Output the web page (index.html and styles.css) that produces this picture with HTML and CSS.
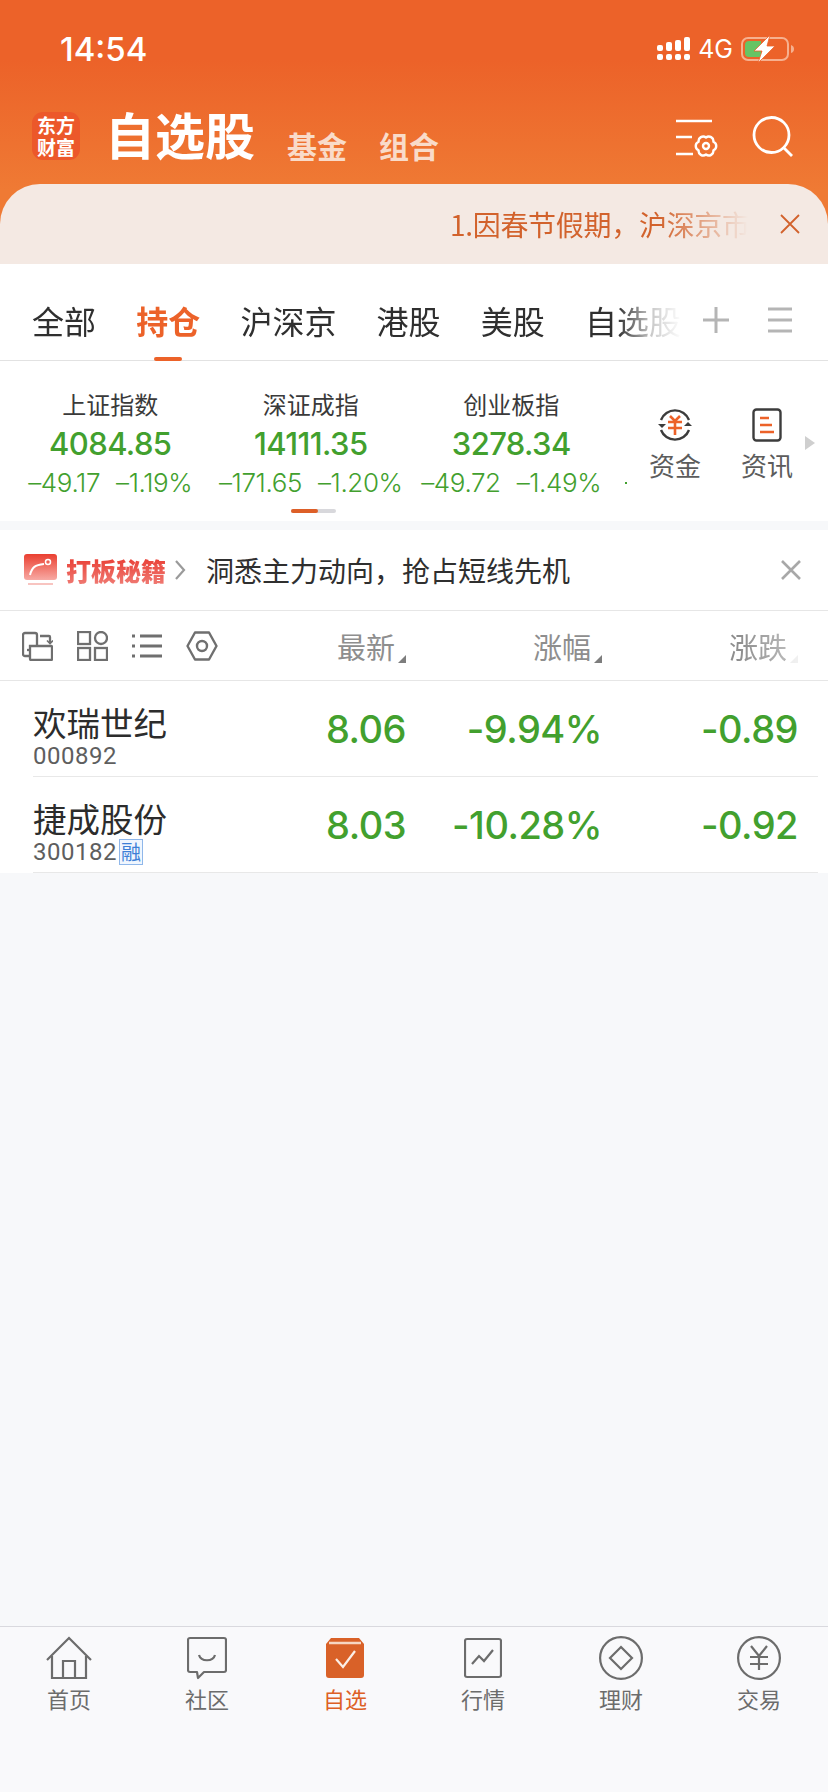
FILE: index.html
```html
<!DOCTYPE html>
<html lang="zh-CN">
<head>
  <meta charset="UTF-8">
  <meta name="viewport" content="width=device-width, initial-scale=1.0">
  <title>自选股</title>
  <link rel="stylesheet" href="styles.css">
</head>
<body>
<div class="page">

  <!-- orange header -->
  <header class="top">
    <div class="status">
      <span class="time">14:54</span>
      <div class="status-right">
        <svg class="signal" width="34" height="24" viewBox="0 0 34 24" fill="#fff">
          <rect x="0" y="8" width="6" height="6" rx="2"/><rect x="9" y="5" width="6" height="9" rx="2"/><rect x="18" y="3" width="6" height="11" rx="2"/><rect x="27" y="0" width="6" height="14" rx="2"/>
          <rect x="0" y="17" width="6" height="6" rx="2"/><rect x="9" y="17" width="6" height="6" rx="2"/><rect x="18" y="17" width="6" height="6" rx="2"/><rect x="27" y="17" width="6" height="6" rx="2"/>
        </svg>
        <span class="net">4G</span>
        <svg class="battery" width="54" height="28" viewBox="0 0 54 28">
          <rect x="1" y="3" width="46" height="22" rx="6" fill="none" stroke="#f6b08f" stroke-width="2"/>
          <path d="M8 6h12v16H8a4 4 0 0 1-4-4v-8a4 4 0 0 1 4-4z" fill="#66c464"/>
          <path d="M29 0 L13 16 H21 L17 28 L34 11 H26 Z" fill="#fff" stroke="#ec6229" stroke-width=".8"/>
          <path d="M50 10 q3 1 3 4 t-3 4z" fill="#f6b08f"/>
        </svg>
      </div>
    </div>
    <div class="head">
      <div class="logo"><span>东方</span><span>财富</span></div>
      <h1 class="title">自选股</h1>
      <a class="sub">基金</a>
      <a class="sub">组合</a>
      <div class="head-icons">
        <svg width="42" height="38" viewBox="0 0 42 38" fill="none" stroke="#fff" stroke-width="2.400">
          <path d="M0 2h36M0 18h16M0 35h17"/>
          <path d="M30 18.500A4.600 4.600 0 0 1 37.400 22.750A4.600 4.600 0 0 1 37.400 31.250A4.600 4.600 0 0 1 30 35.500A4.600 4.600 0 0 1 22.600 31.250A4.600 4.600 0 0 1 22.600 22.750A4.600 4.600 0 0 1 30 18.500z" stroke-linejoin="round"/>
          <circle cx="30" cy="27" r="3"/>
        </svg>
        <svg width="42" height="42" viewBox="0 0 42 42" fill="none" stroke="#fff" stroke-width="2.800">
          <circle cx="20.500" cy="20" r="17.500"/>
          <path d="M32 32l9 9"/>
        </svg>
      </div>
    </div>
    <div class="notice">
      <span class="notice-text">1.因春节假期，沪深京市</span>
      <svg class="notice-x" width="20" height="20" viewBox="0 0 20 20" fill="none" stroke="#d2622c" stroke-width="1.800"><path d="M1 1l18 18M19 1L1 19"/></svg>
    </div>
  </header>

  <!-- market tabs -->
  <nav class="tabs">
    <div class="tab-list">
      <a class="tab">全部</a>
      <a class="tab active">持仓</a>
      <a class="tab">沪深京</a>
      <a class="tab">港股</a>
      <a class="tab">美股</a>
      <a class="tab">自选股</a>
    </div>
    <svg class="tab-plus" width="28" height="28" viewBox="0 0 28 28" stroke="#b5b5b5" stroke-width="3"><path d="M14 1v26M1 14h26"/></svg>
    <svg class="tab-menu" width="24" height="26" viewBox="0 0 24 26" stroke="#b5b5b5" stroke-width="3"><path d="M0 2h24M0 13h24M0 24h24"/></svg>
  </nav>

  <!-- index strip -->
  <section class="indices">
    <div class="index-list">
      <div class="index">
        <div class="index-name">上证指数</div>
        <div class="index-value">4084.85</div>
        <div class="index-change"><span>–49.17</span><span>–1.19%</span></div>
      </div>
      <div class="index">
        <div class="index-name">深证成指</div>
        <div class="index-value">14111.35</div>
        <div class="index-change"><span>–171.65</span><span>–1.20%</span></div>
      </div>
      <div class="index">
        <div class="index-name">创业板指</div>
        <div class="index-value">3278.34</div>
        <div class="index-change"><span>–49.72</span><span>–1.49%</span></div>
      </div>
    </div>
    <span class="index-dot"></span>
    <div class="shortcut">
      <svg width="36" height="36" viewBox="0 0 36 36" fill="none">
        <path d="M4 13A15 15 0 0 1 32 13M32 23A15 15 0 0 1 4 23" stroke="#3c3c3c" stroke-width="2.400"/>
        <path d="M1 17l4 4 4-4zM27 19l4-4 4 4z" fill="#3c3c3c"/>
        <path d="M13 9l5 5 5-5M11 15h14M11 21h14M18 14v14" stroke="#ec6229" stroke-width="2.600"/>
      </svg>
      <span>资金</span>
    </div>
    <div class="shortcut">
      <svg width="30" height="34" viewBox="0 0 30 34" fill="none">
        <rect x="1.500" y="1.500" width="27" height="31" rx="3" stroke="#3c3c3c" stroke-width="2.400"/>
        <path d="M8 10h9M8 17h12M8 24h14" stroke="#ec6229" stroke-width="2.600"/>
      </svg>
      <span>资讯</span>
    </div>
    <span class="more-arrow"></span>
    <div class="pager"><span></span></div>
  </section>

  <!-- promo -->
  <section class="promo">
    <svg class="promo-icon" width="33" height="32" viewBox="0 0 33 32">
      <defs><linearGradient id="pg" x1="0" y1="0" x2="0" y2="1"><stop offset="0" stop-color="#ea3f30"/><stop offset="1" stop-color="#f7aaa4"/></linearGradient></defs>
      <rect x="0" y="0" width="33" height="26" rx="3" fill="url(#pg)"/>
      <rect x="4" y="29" width="25" height="2" fill="#f8c4c0"/>
      <path d="M6 21c2-8 5-10 14-11" fill="none" stroke="#fff" stroke-width="2"/>
      <circle cx="24" cy="8" r="2.500" fill="none" stroke="#fff" stroke-width="1.500"/>
    </svg>
    <span class="promo-name">打板秘籍</span>
    <svg class="promo-chev" width="11" height="20" viewBox="0 0 11 20" fill="none" stroke="#9a9a9a" stroke-width="2.200"><path d="M1 1l8 9-8 9"/></svg>
    <span class="promo-text">洞悉主力动向，抢占短线先机</span>
    <svg class="promo-x" width="20" height="20" viewBox="0 0 20 20" fill="none" stroke="#a8a8a8" stroke-width="2.600"><path d="M1 1l18 18M19 1L1 19"/></svg>
  </section>

  <!-- list header -->
  <section class="toolbar">
    <div class="tools">
      <svg width="31" height="30" viewBox="0 0 31 30" fill="none" stroke="#6f6f6f" stroke-width="2.300">
        <path d="M8 25H3a2 2 0 0 1-2-2V4a2 2 0 0 1 2-2h10a2 2 0 0 1 2 2v11"/>
        <path d="M8 15h21a1 1 0 0 1 1 1v12a1 1 0 0 1-1 1H9a1 1 0 0 1-1-1z"/>
        <path d="M5 19h3"/>
        <path d="M18 5h9a1 1 0 0 1 1 1v6"/>
        <path d="M25 9.500l3 3 3-3" stroke-width="1.600"/>
      </svg>
      <svg width="31" height="30" viewBox="0 0 31 30" fill="none" stroke="#6f6f6f" stroke-width="2.300">
        <rect x="1" y="1" width="12" height="12"/><circle cx="24" cy="7" r="6"/>
        <rect x="1" y="17" width="12" height="12"/><rect x="18" y="17" width="12" height="12"/>
      </svg>
      <svg width="30" height="26" viewBox="0 0 30 26" fill="none" stroke="#6f6f6f" stroke-width="3">
        <path d="M8 3h22M8 13h22M8 23h22M0 3h3M0 13h3M0 23h3"/>
      </svg>
      <svg width="32" height="30" viewBox="0 0 32 30" fill="none" stroke="#6f6f6f" stroke-width="2.400">
        <path d="M9 1.500h14L30.500 15 23 28.500H9L1.500 15z" stroke-linejoin="round"/>
        <circle cx="16" cy="15" r="5"/>
      </svg>
    </div>
    <div class="col col-1 sort">最新<i></i></div>
    <div class="col col-2 sort">涨幅<i></i></div>
    <div class="col col-3 sort fade">涨跌<i></i></div>
  </section>

  <!-- stock rows -->
  <section class="stocks">
    <div class="stock">
      <div class="stock-info">
        <div class="stock-name">欢瑞世纪</div>
        <div class="stock-code">000892</div>
      </div>
      <div class="col col-1 num">8.06</div>
      <div class="col col-2 num">-9.94%</div>
      <div class="col col-3 num">-0.89</div>
    </div>
    <div class="stock">
      <div class="stock-info">
        <div class="stock-name">捷成股份</div>
        <div class="stock-code">300182<span class="tag">融</span></div>
      </div>
      <div class="col col-1 num">8.03</div>
      <div class="col col-2 num">-10.28%</div>
      <div class="col col-3 num">-0.92</div>
    </div>
  </section>

  <div class="spacer"></div>

  <!-- bottom nav -->
  <footer class="bar">
    <a class="bar-item">
      <svg width="46" height="42" viewBox="0 0 46 42" fill="none" stroke="#6c6c6c" stroke-width="2.200">
        <path d="M1 23L23 1l22 22" />
        <path d="M6 19v22h34V19M17 41V24h12v17"/>
      </svg>
      <span>首页</span>
    </a>
    <a class="bar-item">
      <svg width="40" height="42" viewBox="0 0 40 42" fill="none" stroke="#6c6c6c" stroke-width="2.200">
        <path d="M3 1h34a2 2 0 0 1 2 2v30a2 2 0 0 1-2 2H17l-6 6-1-6H3a2 2 0 0 1-2-2V3a2 2 0 0 1 2-2z" stroke-linejoin="round"/>
        <path d="M12 18c2 7 14 7 16 0"/>
      </svg>
      <span>社区</span>
    </a>
    <a class="bar-item on">
      <svg width="38" height="40" viewBox="0 0 38 40">
        <path d="M5 0h28l5 6v31a3 3 0 0 1-3 3H3a3 3 0 0 1-3-3V6z" fill="#d96128"/>
        <path d="M3 5h32" stroke="#f6d6c2" stroke-width="2.500"/>
        <path d="M10 21l7 8 12-16" fill="none" stroke="#fbeee6" stroke-width="2.200"/>
      </svg>
      <span>自选</span>
    </a>
    <a class="bar-item">
      <svg width="38" height="40" viewBox="0 0 38 40" fill="none" stroke="#6c6c6c" stroke-width="2.200">
        <rect x="1" y="1" width="36" height="38" rx="2"/>
        <path d="M8 26l7-8 5 5 9-11"/>
      </svg>
      <span>行情</span>
    </a>
    <a class="bar-item">
      <svg width="44" height="44" viewBox="0 0 44 44" fill="none" stroke="#6c6c6c" stroke-width="2.200">
        <circle cx="22" cy="22" r="20.900"/>
        <path d="M22 11l11 11-11 11-11-11z"/>
      </svg>
      <span>理财</span>
    </a>
    <a class="bar-item">
      <svg width="44" height="44" viewBox="0 0 44 44" fill="none" stroke="#6c6c6c" stroke-width="2.200">
        <circle cx="22" cy="22" r="20.900"/>
        <path d="M14 10l8 10 8-10M13 21h18M13 28h18M22 20v14"/>
      </svg>
      <span>交易</span>
    </a>
  </footer>

</div>
</body>
</html>
```

FILE: styles.css
```css
/* Basic styling */
* {
  box-sizing: border-box;
}

body {
  margin: 0;
  font-family: "Noto Sans CJK SC", Inter, sans-serif;
  color: #2c2c2c;
}

.page {
  width: 828px;
  height: 1792px;
  display: flex;
  flex-direction: column;
  background: #f7f8fa;
  overflow: hidden;
}

/* Header */
.top {
  height: 264px;
  background: linear-gradient(#ec6229 0, #ec6229 60px, #ef7a34 190px);
  display: flex;
  flex-direction: column;
}

.status {
  height: 93px;
  padding: 30px 33px 0 60px;
  display: flex;
  justify-content: space-between;
  align-items: flex-start;
  color: #fff;
}

.time {
  font-family: Inter, sans-serif;
  font-weight: 500;
  font-size: 33px;
  line-height: 38px;
}

.status-right {
  display: flex;
  align-items: center;
  height: 38px;
}

.net {
  font-family: Inter, sans-serif;
  font-size: 25px;
  margin: 0 8px 0 7px;
}

.head {
  height: 91px;
  display: flex;
  align-items: center;
  padding: 0 35px 6px 32px;
}

.logo {
  width: 48px;
  height: 48px;
  border-radius: 11px;
  background: #ec582a;
  color: #fff;
  display: flex;
  flex-direction: column;
  align-items: center;
  justify-content: center;
  font-weight: 700;
  font-size: 19px;
  line-height: 22px;
}

.title {
  margin: -6px 32px 0 25px;
  color: #fff;
  font-size: 50px;
  font-weight: 700;
  line-height: 60px;
}

.sub {
  margin: 19px 32px 0 0;
  color: #f9dbc9;
  font-size: 30px;
  font-weight: 700;
  line-height: 40px;
}

.head-icons {
  margin-left: auto;
  display: flex;
  align-items: flex-end;
  gap: 33px;
}

.notice {
  height: 80px;
  background: #f4e9e3;
  border-radius: 40px 40px 0 0;
  display: flex;
  align-items: center;
  justify-content: flex-end;
  padding: 0 28px 0 0;
}

.notice-text {
  width: 298px;
  white-space: nowrap;
  overflow: hidden;
  font-size: 28px;
  line-height: 40px;
  letter-spacing: -.3px;
  color: #d2622c;
  -webkit-mask-image: linear-gradient(to right, #000 70%, transparent 100%);
  mask-image: linear-gradient(to right, #000 70%, transparent 100%);
}

.notice-x {
  margin-left: 32px;
}

/* Tabs */
.tabs {
  position: relative;
  height: 97px;
  background: #fff;
  border-bottom: 1px solid #e2e2e2;
  display: flex;
  align-items: center;
  padding: 15px 0 0 32px;
}

.tab-list {
  width: 650px;
  display: flex;
  gap: 40.200px;
  overflow: hidden;
  -webkit-mask-image: linear-gradient(to right, #000 585px, rgba(0,0,0,.25) 620px, transparent 650px);
  mask-image: linear-gradient(to right, #000 585px, rgba(0,0,0,.25) 620px, transparent 650px);
}

.tab {
  flex: none;
  font-size: 32px;
  line-height: 46px;
  color: #2f2f2f;
}

.tab.active {
  color: #ec6229;
  font-weight: 700;
}

.tab-plus {
  margin-left: 20px;
}

.tab-menu {
  margin-left: 38px;
}

/* The underline of the active tab sits on the tab bar's border, so it is an overlay */
.tabs::after {
  content: "";
  position: absolute;
  left: 154px;
  bottom: -1px;
  width: 28px;
  height: 4px;
  border-radius: 2px;
  background: #ec6229;
}

/* Index strip */
.indices {
  position: relative;
  height: 160px;
  background: #fff;
  display: flex;
  align-items: flex-start;
  padding: 25px 0 0 10px;
  margin-bottom: 9px;
}

.index-list {
  display: flex;
  width: 602px;
}

.index {
  width: 200.500px;
  flex: none;
  text-align: center;
}

.index-name {
  font-size: 24px;
  line-height: 36px;
  color: #3a3a3a;
}

.index-value {
  font-family: Inter, sans-serif;
  font-weight: 500;
  font-size: 31px;
  line-height: 42px;
  letter-spacing: -.6px;
  color: #42a02e;
  margin-top: 1px;
}

.index-change {
  display: flex;
  justify-content: center;
  gap: 16px;
  font-family: Inter, sans-serif;
  font-size: 26px;
  font-weight: 300;
  line-height: 34px;
  letter-spacing: -.4px;
  margin-top: 1px;
  color: #42a02e;
}

.index-dot {
  width: 2px;
  height: 2px;
  background: #42a02e;
  margin: 96px 2px 0 13px;
}

.shortcut {
  width: 92px;
  display: flex;
  flex-direction: column;
  align-items: center;
  font-size: 26px;
  line-height: 36px;
  color: #5c5c5c;
  padding-top: 21px;
}

.shortcut svg {
  height: 36px;
  margin-bottom: 4px;
}

.more-arrow {
  width: 0;
  height: 0;
  margin: 50px 0 0 -8px;
  border-left: 10px solid #cfcfcf;
  border-top: 7px solid transparent;
  border-bottom: 7px solid transparent;
}

.pager {
  position: absolute;
  left: 291px;
  top: 148px;
  width: 45px;
  height: 4px;
  border-radius: 2px;
  background: #d8d8dc;
}

.pager span {
  display: block;
  width: 27px;
  height: 4px;
  border-radius: 2px;
  background: #dd5f28;
}

/* Promo */
.promo {
  height: 81px;
  background: #fff;
  border-bottom: 1px solid #e6e6e6;
  display: flex;
  align-items: center;
  padding: 0 27px 0 24px;
}

.promo-name {
  margin-left: 9px;
  font-size: 25px;
  font-weight: 900;
  line-height: 34px;
  background: linear-gradient(#e8352b, #f07f78);
  -webkit-background-clip: text;
  background-clip: text;
  color: transparent;
}

.promo-chev {
  margin-left: 9px;
}

.promo-text {
  margin-left: 20px;
  font-size: 28px;
  line-height: 40px;
  color: #2f2f2f;
}

.promo-x {
  margin-left: auto;
}

/* Columns shared by header and rows */
.toolbar,
.stock {
  display: flex;
  align-items: center;
}

.col {
  flex: none;
  text-align: right;
}

.col-1 { width: 156px; }
.col-2 { width: 196px; }
.col-3 { width: 196px; }

.toolbar {
  height: 70px;
  background: #fff;
  border-bottom: 1px solid #e6e6e6;
  padding: 0 30px 0 22px;
}

.tools {
  width: 228px;
  display: flex;
  align-items: center;
  gap: 24px;
}

.sort {
  display: flex;
  justify-content: flex-end;
  align-items: flex-end;
  font-size: 29px;
  line-height: 40px;
  color: #8e8e8e;
}

.sort i {
  width: 0;
  height: 0;
  margin: 0 0 3px 3px;
  border-left: 8px solid transparent;
  border-bottom: 8px solid #7d7d7d;
}

.sort.fade i {
  border-bottom-color: #e4e4e4;
}

.sort.fade {
  -webkit-mask-image: linear-gradient(to right, #000 70%, rgba(0,0,0,.55) 100%);
  mask-image: linear-gradient(to right, #000 70%, rgba(0,0,0,.55) 100%);
}

/* Stock rows */
.stocks {
  background: #fff;
  padding: 0 10px 0 33px;
}

.stock {
  height: 96px;
  padding-right: 20px;
  border-bottom: 1px solid #e8e8e8;
}

.stock-info {
  width: 217px;
  flex: none;
  margin-top: 15px;
}

.stock-name {
  font-size: 33.500px;
  line-height: 40px;
  color: #2c2c2c;
}

.stock-code {
  display: flex;
  align-items: center;
  font-family: Roboto, sans-serif;
  font-size: 24px;
  line-height: 28px;
  letter-spacing: .5px;
  color: #5e5e5e;
}

.tag {
  margin-left: 2px;
  width: 24px;
  height: 26px;
  border: 1px solid #8fb7ea;
  background: #f0f6fe;
  color: #3d7fd6;
  font-family: "Noto Sans CJK SC", sans-serif;
  font-size: 20px;
  line-height: 24px;
  text-align: center;
  letter-spacing: 0;
}

.num {
  font-family: Inter, sans-serif;
  font-weight: 500;
  font-size: 38px;
  line-height: 48px;
  letter-spacing: -.5px;
  color: #42a02e;
}

.spacer {
  flex: 1;
}

/* Bottom nav */
.bar {
  height: 166px;
  background: #f9f9fb;
  border-top: 1px solid #d9d9de;
  display: flex;
  align-items: flex-start;
}

.bar-item {
  width: 138px;
  flex: none;
  height: 90px;
  padding-top: 9px;
  display: flex;
  flex-direction: column;
  align-items: center;
  font-size: 22px;
  line-height: 30px;
  color: #6c6c6c;
}

.bar-item svg {
  flex: none;
  height: 44px;
  margin-bottom: 3px;
}

.bar-item.on {
  color: #dd6025;
}
```
